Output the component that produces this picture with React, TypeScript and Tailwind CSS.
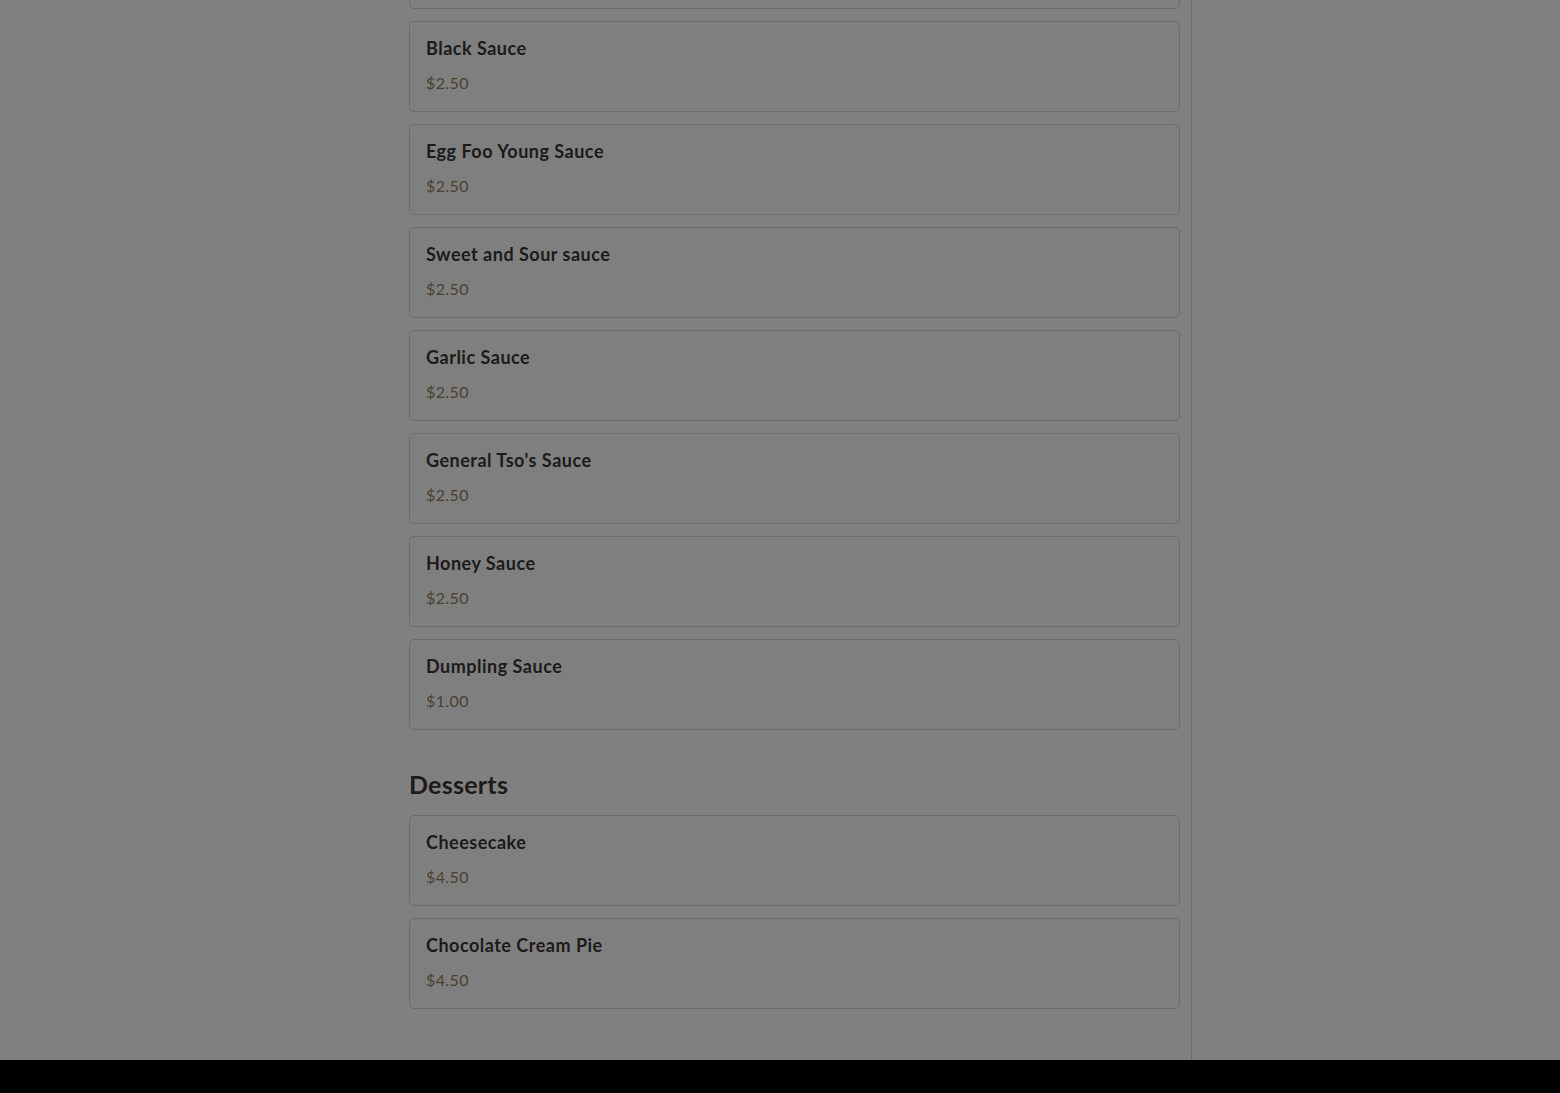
import React from "react";

type Item = { name: string; price: string };

const sauces: Item[] = [
  { name: "Black Sauce", price: "$2.50" },
  { name: "Egg Foo Young Sauce", price: "$2.50" },
  { name: "Sweet and Sour sauce", price: "$2.50" },
  { name: "Garlic Sauce", price: "$2.50" },
  { name: "General Tso's Sauce", price: "$2.50" },
  { name: "Honey Sauce", price: "$2.50" },
  { name: "Dumpling Sauce", price: "$1.00" },
];

const desserts: Item[] = [
  { name: "Cheesecake", price: "$4.50" },
  { name: "Chocolate Cream Pie", price: "$4.50" },
];

function Card({ item }: { item: Item }) {
  return (
    <div className="h-[91px] rounded-[5px] border border-[#6c6c6c] bg-[#7f7f7f] px-4 pt-[15px]">
      <div className="text-[18px] font-bold leading-[22px] tracking-[0.5px] text-[#1c1a1a]">{item.name}</div>
      <div className="mt-[13px] text-[16px] leading-[22px] tracking-[0.4px] text-[#4b3f2f]">{item.price}</div>
    </div>
  );
}

export default function App() {
  return (
    <div
      className="flex h-[1093px] w-[1560px] flex-col overflow-hidden bg-black"
      style={{ fontFamily: "Lato, 'Noto Sans', sans-serif" }}
    >
      <div className="flex h-[1060px] bg-[#808080]">
        <div className="w-[397px] shrink-0" />
        <main className="w-[795px] shrink-0 border-r border-[#6a6a6a] pl-3 pr-[11px]">
          <div className="-mt-[82px] flex flex-col gap-3">
            <div className="h-[91px] rounded-[5px] border border-[#6c6c6c] bg-[#7f7f7f]" />
            {sauces.map((s) => (
              <Card key={s.name} item={s} />
            ))}
          </div>
          <h2 className="mt-[38px] mb-[15px] text-[25px] font-bold leading-[32px] tracking-[0.25px] text-[#1c1a1a]">
            Desserts
          </h2>
          <div className="flex flex-col gap-3">
            {desserts.map((s) => (
              <Card key={s.name} item={s} />
            ))}
          </div>
        </main>
        <div className="flex-1" />
      </div>
      <div className="h-[33px] bg-black" />
    </div>
  );
}
